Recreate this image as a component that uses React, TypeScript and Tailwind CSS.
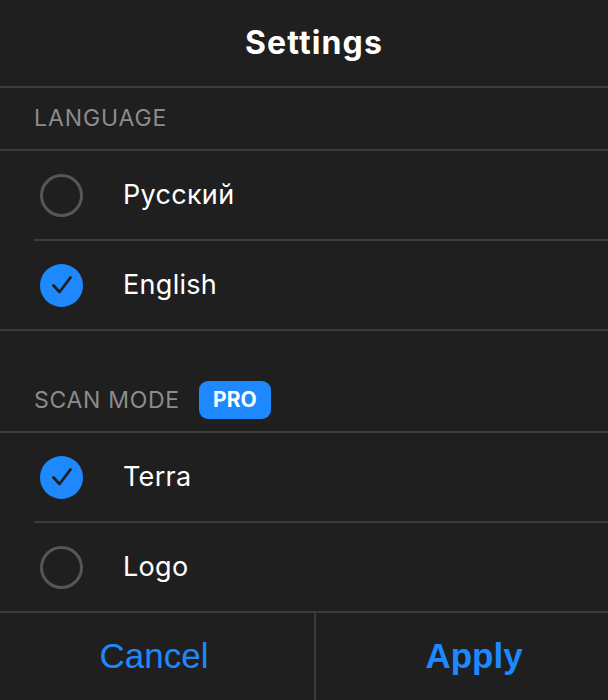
import { useState } from 'react';

type Option = { id: string; label: string };

const LANGUAGES: Option[] = [
  { id: 'ru', label: 'Русский' },
  { id: 'en', label: 'English' },
];

const MODES: Option[] = [
  { id: 'terra', label: 'Terra' },
  { id: 'logo', label: 'Logo' },
];

function Radio({ checked }: { checked: boolean }) {
  if (checked) {
    return (
      <div className="w-[43px] h-[43px] rounded-full bg-[#1e88ff] flex items-center justify-center shrink-0">
        <svg width="24" height="24" viewBox="0 0 24 24" fill="none">
          <path d="M3.5 12.5 L9.5 19 L20.5 4.5" stroke="#1f1f1f" strokeWidth="2.8" strokeLinecap="round" strokeLinejoin="round" />
        </svg>
      </div>
    );
  }
  return <div className="w-[43px] h-[43px] rounded-full border-[3px] border-[#565656] shrink-0" />;
}

function OptionList({ options, value, onChange }: { options: Option[]; value: string; onChange: (id: string) => void }) {
  return (
    <div>
      {options.map((opt, idx) => (
        <div key={opt.id}>
          <button
            onClick={() => onChange(opt.id)}
            className="w-full h-[88px] flex items-center gap-[40px] pl-[40px] text-left"
          >
            <Radio checked={opt.id === value} />
            <span className="text-[27px] text-white tracking-[0.3px]">{opt.label}</span>
          </button>
          {idx < options.length - 1 ? (
            <div className="h-[2px] bg-[#3b3b3b] ml-[34px]" />
          ) : (
            <div className="h-[2px] bg-[#3b3b3b]" />
          )}
        </div>
      ))}
    </div>
  );
}

export default function App() {
  const [lang, setLang] = useState('en');
  const [mode, setMode] = useState('terra');

  return (
    <div className="w-[608px] h-[700px] bg-[#1f1f1f] overflow-hidden">
      {/* sheet is a bit wider than the viewport, right edge is cut off */}
      <div className="w-[628px] h-[700px] font-['Inter',sans-serif] flex flex-col">
        {/* Header */}
        <div className="h-[86px] flex items-center justify-center">
          <h1 className="text-[32px] font-bold text-white tracking-[1.1px]">Settings</h1>
        </div>
        <div className="h-[2px] bg-[#3b3b3b]" />

        {/* Language */}
        <div className="h-[61px] flex items-center pl-[34px]">
          <span className="text-[23px] text-[#8c8c8c] uppercase tracking-[0.9px]">Language</span>
        </div>
        <div className="h-[2px] bg-[#3b3b3b]" />
        <OptionList options={LANGUAGES} value={lang} onChange={setLang} />

        {/* Scan mode */}
        <div className="h-[100px] flex items-end pl-[34px] pb-[12px]">
          <div className="flex items-center gap-[19px] h-[38px]">
            <span className="text-[23px] text-[#8c8c8c] uppercase tracking-[0.7px]">Scan mode</span>
            <span className="h-[38px] w-[72px] rounded-[9px] bg-[#1e88ff] text-white font-bold text-[21px] flex items-center justify-center">
              PRO
            </span>
          </div>
        </div>
        <div className="h-[2px] bg-[#3b3b3b]" />
        <OptionList options={MODES} value={mode} onChange={setMode} />

        {/* Buttons */}
        <div className="flex flex-1 font-['Liberation_Sans',Arial,sans-serif] text-[35px] text-[#1e88ff]">
          <button className="w-[314px] flex items-center justify-center pr-[6px]">Cancel</button>
          <div className="w-[2px] bg-[#3b3b3b]" />
          <button className="flex-1 flex items-center justify-center font-bold pl-[4px]">Apply</button>
        </div>
      </div>
    </div>
  );
}
